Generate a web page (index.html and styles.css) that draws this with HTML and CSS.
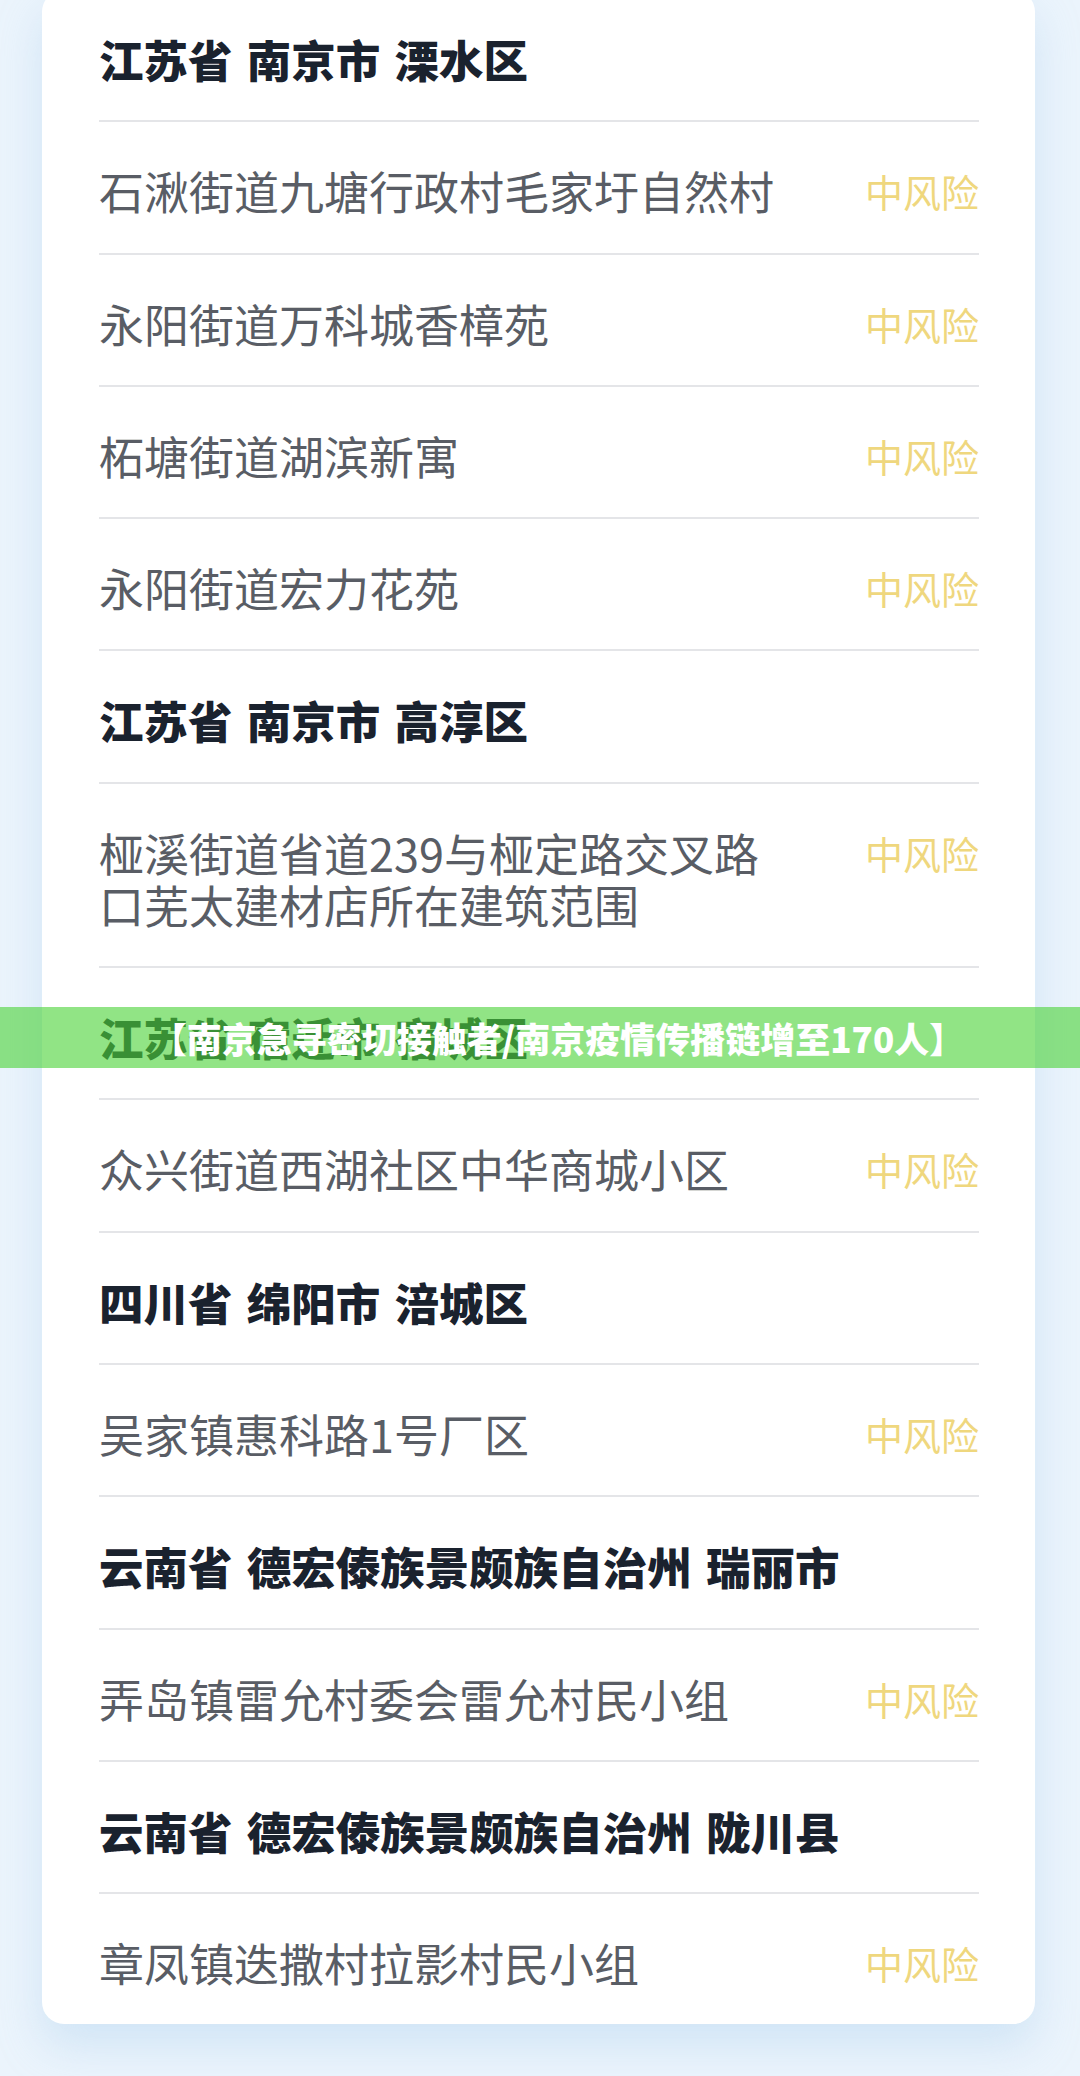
FILE: index.html
```html
<!DOCTYPE html>
<html lang="zh-CN">
<head>
  <meta charset="UTF-8" />
  <meta name="viewport" content="width=device-width, initial-scale=1.0"/>
  <title>中风险地区</title>
  <link rel="stylesheet" href="styles.css">
</head>
<body>

  <div class="page">
    <div class="risk-card">
      <div class="row head">江苏省 南京市 溧水区</div>
      <div class="row"><span class="place">石湫街道九塘行政村毛家圩自然村</span><span class="risk">中风险</span></div>
      <div class="row"><span class="place">永阳街道万科城香樟苑</span><span class="risk">中风险</span></div>
      <div class="row"><span class="place">柘塘街道湖滨新寓</span><span class="risk">中风险</span></div>
      <div class="row"><span class="place">永阳街道宏力花苑</span><span class="risk">中风险</span></div>

      <div class="row head">江苏省 南京市 高淳区</div>
      <div class="row"><span class="place">桠溪街道省道239与桠定路交叉路口芜太建材店所在建筑范围</span><span class="risk">中风险</span></div>

      <div class="row head">江苏省 宿迁市 宿城区</div>
      <div class="row"><span class="place">众兴街道西湖社区中华商城小区</span><span class="risk">中风险</span></div>

      <div class="row head">四川省 绵阳市 涪城区</div>
      <div class="row"><span class="place">吴家镇惠科路1号厂区</span><span class="risk">中风险</span></div>

      <div class="row head">云南省 德宏傣族景颇族自治州 瑞丽市</div>
      <div class="row"><span class="place">弄岛镇雷允村委会雷允村民小组</span><span class="risk">中风险</span></div>

      <div class="row head">云南省 德宏傣族景颇族自治州 陇川县</div>
      <div class="row"><span class="place">章凤镇迭撒村拉影村民小组</span><span class="risk">中风险</span></div>
    </div>

    <div class="banner">【南京急寻密切接触者/南京疫情传播链增至170人】</div>
  </div>

</body>
</html>
```

FILE: styles.css
```css
* {
  box-sizing: border-box;
  margin: 0;
  padding: 0;
  font-family: "Noto Sans CJK SC", "Noto Sans", sans-serif;
}

body {
  background: #ebf4fc;
  width: 1080px;
  height: 2076px;
  overflow: hidden;
}

.page {
  position: relative;
  height: 100%;
  padding-top: 1px;
}

.risk-card {
  width: 993px;
  margin: -11px 0 0 42px;
  padding: 0 56px 0 57px;
  background: #fff;
  border-radius: 22px;
  box-shadow: 0 22px 44px rgba(160, 200, 235, 0.35);
}

.row {
  display: flex;
  justify-content: space-between;
  align-items: flex-start;
  padding: 43px 0 35.3px;
  line-height: 52px;
  border-bottom: 2px solid #e4e5e8;
}

.row:last-child {
  border-bottom: none;
}

.head {
  font-size: 44.5px;
  font-weight: 900;
  color: #1a222e;
  word-spacing: 4px;
}

.place {
  flex: 1;
  padding-right: 80px;
  font-size: 45px;
  color: #595d65;
}

.risk {
  font-size: 38px;
  color: #efd77e;
  white-space: nowrap;
}

/* overlay caption across the screenshot */
.banner {
  position: absolute;
  top: 1007px;
  left: 0;
  right: 0;
  height: 61px;
  padding-left: 36px;
  background: rgba(78, 212, 58, 0.62);
  color: #fff;
  font-size: 35px;
  font-weight: 900;
  line-height: 61px;
  text-align: center;
  white-space: nowrap;
}
```
